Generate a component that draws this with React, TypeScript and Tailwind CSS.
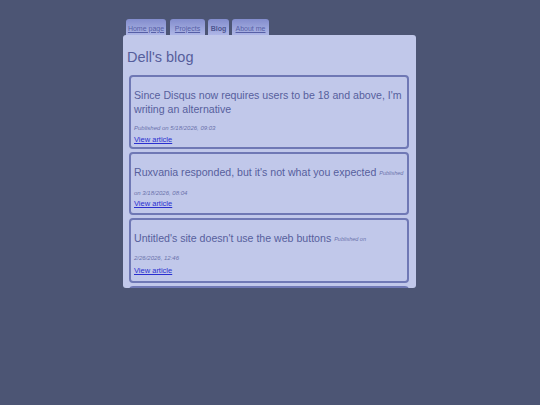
const font = { fontFamily: '"Comic Sans MS", "Liberation Sans", Arial, sans-serif' };

const tabs = [
  { label: "Home page", active: false, w: "w-[40px]" },
  { label: "Projects", active: false, w: "w-[35px]" },
  { label: "Blog", active: true, w: "w-[21px]" },
  { label: "About me", active: false, w: "w-[37px]" },
];

export default function App() {
  return (
    <div className="w-[540px] h-[405px] bg-[#4c5574] pt-[19px] pl-[123px]" style={font}>
      <div className="w-[293px]">
        <div className="flex gap-[3px] pl-[3px] h-[16px]">
          {tabs.map((t, i) => (
            <a
              key={t.label}
              href="#"
              className={
                t.w +
                (i === 1 ? " ml-[1px]" : "") +
                " flex items-center justify-center pt-[2px] rounded-t-[3px] bg-gradient-to-b from-[#838dcd] to-[#aeb6e6] text-[7px] leading-none " +
                (t.active ? "font-bold text-[#4d5590] no-underline" : "text-[#565fa6] underline")
              }
            >
              {t.label}
            </a>
          ))}
        </div>
        <div className="h-[253px] overflow-hidden rounded-[3px] bg-[#c1c8ea] pl-[6px] pr-[7px]">
          <h1 className="text-[14.5px] leading-[18px] text-[#565e9c] -ml-[2px] pt-[13px] pb-[9px]">Dell's blog</h1>
          <div className="flex flex-col gap-[3px]">
            <article className="border-2 border-[#6f78b5] rounded-[4px] px-[3px] pt-[11px] pb-[2px]">
              <h2 className="text-[10.6px] leading-[14px] text-[#575f9d]">
                Since Disqus now requires users to be 18 and above, I'm writing an alternative
              </h2>
              <p className="mt-[7px] text-[6px] leading-[10px] italic text-[#6a72aa]">Published on 5/18/2026, 09:03</p>
              <a href="#" className="block mt-[2px] text-[7.5px] leading-[10px] text-[#2a2fd0] underline">View article</a>
            </article>
            <article className="border-2 border-[#6f78b5] rounded-[4px] px-[3px] pt-[11px] pb-[4px]">
              <h2 className="text-[10.6px] leading-[14px] text-[#575f9d] whitespace-nowrap">
                Ruxvania responded, but it's not what you expected{" "}
                <small className="text-[5.5px] italic text-[#6a72aa] align-[1px]">Published</small>
              </h2>
              <p className="mt-[8px] text-[6px] leading-[10px] italic text-[#6a72aa]">on 3/18/2026, 08:04</p>
              <a href="#" className="block mt-[1px] text-[7.5px] leading-[10px] text-[#2a2fd0] underline">View article</a>
            </article>
            <article className="border-2 border-[#6f78b5] rounded-[4px] px-[3px] pt-[11px] pb-[5px]">
              <h2 className="text-[10.6px] leading-[14px] text-[#575f9d] whitespace-nowrap">
                Untitled's site doesn't use the web buttons{" "}
                <small className="text-[5.5px] italic text-[#6a72aa] align-[1px]">Published on</small>
              </h2>
              <p className="mt-[7px] text-[6px] leading-[10px] italic text-[#6a72aa]">2/26/2026, 12:46</p>
              <a href="#" className="block mt-[3px] text-[7.5px] leading-[10px] text-[#2a2fd0] underline">View article</a>
            </article>
            <article className="h-[60px] border-2 border-[#6f78b5] rounded-[4px]" />
          </div>
        </div>
      </div>
    </div>
  );
}
